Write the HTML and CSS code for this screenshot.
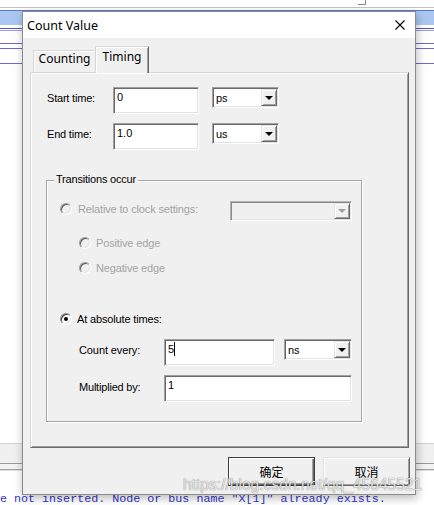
FILE: index.html
```html
<!DOCTYPE html>
<html>
<head>
<meta charset="utf-8">
<title>Count Value</title>
<link rel="stylesheet" href="styles.css">
</head>
<body>
<div class="desk">
  <div class="top"><div class="corner"></div></div>
  <div class="band"></div>
  <div class="dline"></div>
  <div class="bline b1"></div>
  <div class="bline b2"></div>
  <div class="bline b3"></div>
  <div class="spacer"></div>
  <div class="tool"></div>
  <div class="sep1"></div>
  <div class="sep2"></div>
  <div class="msgs">e not inserted. Node or bus name "X[1]" already exists.</div>
</div>

<div class="dialog">
  <div class="titlebar">
    <span class="title">Count Value</span>
    <svg class="close" width="10" height="10" viewBox="0 0 10 10"><path d="M0.5 0.5 L9.5 9.5 M9.5 0.5 L0.5 9.5" stroke="#000" stroke-width="1.1" fill="none"/></svg>
  </div>
  <div class="client">
    <div class="tabs">
      <div class="tab">Counting</div>
      <div class="tab active">Timing</div>
    </div>
    <div class="panel">
      <div class="row">
        <span class="lbl">Start time:</span>
        <div class="edit w86">0</div>
        <div class="combo w67"><span class="cv">ps</span><span class="cbtn"><i class="tri"></i></span></div>
      </div>
      <div class="row">
        <span class="lbl">End time:</span>
        <div class="edit w86">1.0</div>
        <div class="combo w67"><span class="cv">us</span><span class="cbtn"><i class="tri"></i></span></div>
      </div>

      <div class="group">
        <div class="legend">Transitions occur</div>
        <div class="opt oa dis">
          <span class="radio"></span>
          <span class="otext">Relative to clock settings:</span>
          <div class="combo cdis"><span class="cv"></span><span class="cbtn"><i class="tri"></i></span></div>
        </div>
        <div class="opt ob dis sub">
          <span class="radio"></span>
          <span class="otext">Positive edge</span>
        </div>
        <div class="opt oc dis sub">
          <span class="radio"></span>
          <span class="otext">Negative edge</span>
        </div>
        <div class="opt od">
          <span class="radio checked"></span>
          <span class="otext">At absolute times:</span>
        </div>
        <div class="frow fe">
          <span class="flbl">Count every:</span>
          <div class="edit w111">5<span class="caret"></span></div>
          <div class="combo w68"><span class="cv">ns</span><span class="cbtn"><i class="tri"></i></span></div>
        </div>
        <div class="frow ff">
          <span class="flbl f2">Multiplied by:</span>
          <div class="edit w188">1</div>
        </div>
      </div>
    </div>
    <div class="buttons">
      <button class="btn def">确定</button>
      <button class="btn">取消</button>
    </div>
  </div>
</div>

<div class="watermark">https://blog.csdn.net/qq_45645521</div>
</body>
</html>
```

FILE: styles.css
```css
html, body {
  margin: 0;
  padding: 0;
}
body {
  width: 434px;
  height: 505px;
  overflow: hidden;
  position: relative;
  background: #fff;
  font-family: "Liberation Sans", Arial, sans-serif;
}

/* background application */
.desk {
  height: 505px;
  display: flex;
  flex-direction: column;
}
.top {
  height: 7px;
  border-bottom: 1px solid #c4c4c4;
  display: flex;
}
.corner {
  margin-left: 358px;
  width: 7px;
  height: 4px;
  border-right: 1px solid #8a8a8a;
  border-bottom: 1px solid #8a8a8a;
}
.band {
  margin-top: 2px;
  height: 14px;
  border-top: 1px solid #5b74d6;
  background: #abc7f1;
}
.dline {
  margin-top: 3px;
  height: 1px;
  border-top: 1px solid #5656c8;
  border-bottom: 1px solid #9b9be2;
}
.bline {
  height: 1px;
  background: #6a6ad2;
}
.b1 { margin-top: 12px; }
.b2 { margin-top: 4px; }
.b3 { margin-top: 14px; }
.spacer { flex: 1; }
.tool {
  height: 19px;
  border-top: 1px solid #d4d4d4;
  background: #f0f0f0;
}
.sep1 {
  height: 5px;
  border-top: 1px solid #9a9a9a;
  background: #f2f2f2;
}
.sep2 {
  height: 1px;
  border-top: 1px solid #a4a4a4;
  background: #dcdcdc;
}
.msgs {
  height: 34px;
  box-sizing: border-box;
  padding-top: 21px;
  font-family: "Liberation Mono", "Courier New", monospace;
  font-size: 11.7px;
  line-height: 14px;
  color: #3434c8;
  white-space: pre;
}

/* dialog window */
.dialog {
  position: absolute;
  left: 22px;
  top: 11px;
  width: 394px;
  height: 484px;
  box-sizing: border-box;
  border: 1px solid #8c8c8c;
  background: #f0f0f0;
  box-shadow: 1px 3px 9px rgba(0, 0, 0, 0.28);
  display: flex;
  flex-direction: column;
}
.titlebar {
  height: 26px;
  background: #fff;
  display: flex;
  align-items: center;
  justify-content: space-between;
  padding: 0 10px 0 4px;
}
.title {
  font-family: "Noto Sans", sans-serif;
  font-size: 12.5px;
  line-height: 17px;
  color: #000;
}
.close { display: block; }

.client {
  padding: 8px 6px 0 7px;
  display: flex;
  flex-direction: column;
}
.tabs {
  height: 27px;
  margin-bottom: -1px;
  padding-left: 3px;
  display: flex;
  align-items: flex-end;
  position: relative;
  z-index: 1;
}
.tab {
  box-sizing: border-box;
  width: 62px;
  height: 22px;
  margin-bottom: 1px;
  border-top: 1px solid #d6d6d6;
  border-left: 1px solid #d6d6d6;
  box-shadow: inset 1px 1px 0 #fff;
  font-family: "Noto Sans", sans-serif;
  font-size: 12px;
  line-height: 16px;
  text-align: center;
  color: #000;
  background: #f0f0f0;
}
.tab.active {
  width: 54px;
  height: 27px;
  margin-bottom: 0;
  padding-top: 2px;
  border-right: 1px solid #696969;
  box-shadow: inset 1px 1px 0 #fff, inset -1px 0 0 #a0a0a0;
}

.panel {
  box-sizing: border-box;
  height: 376px;
  border-top: 1px solid #d6d6d6;
  border-left: 1px solid #d6d6d6;
  border-right: 1px solid #696969;
  border-bottom: 1px solid #696969;
  box-shadow: inset 1px 1px 0 #fff, inset -1px -1px 0 #a0a0a0;
  padding: 14px 0 0 16px;
  display: flex;
  flex-direction: column;
  font-size: 11px;
  color: #000;
}
.row {
  display: flex;
  align-items: flex-start;
  height: 27px;
}
.row + .row { margin-top: 9px; }
.lbl {
  width: 66px;
  padding-top: 5px;
  line-height: 13px;
  letter-spacing: -0.2px;
}

/* edit box */
.edit {
  box-sizing: border-box;
  height: 27px;
  border: 1px solid;
  border-color: #a0a0a0 #fff #fff #a0a0a0;
  box-shadow: inset 1px 1px 0 #696969, inset -1px -1px 0 #e3e3e3;
  background: #fff;
  padding: 3px 3px 0 3px;
  font-size: 11px;
  line-height: 13px;
  color: #000;
  display: flex;
  align-items: flex-start;
}
.w86 { width: 86px; }
.w111 { width: 111px; }
.w188 { width: 188px; }
.caret {
  display: block;
  width: 0;
  height: 14px;
  margin-top: -1px;
  margin-left: 0;
  border-left: 1px solid #000;
}

/* combo box */
.combo {
  box-sizing: border-box;
  height: 21px;
  border: 1px solid;
  border-color: #a0a0a0 #fff #fff #a0a0a0;
  box-shadow: inset 1px 1px 0 #696969, inset -1px -1px 0 #e3e3e3;
  background: #fff;
  padding: 1px;
  display: flex;
}
.row .combo { margin-left: 13px; }
.w67 { width: 67px; }
.w68 { width: 68px; }
.cv {
  flex: 1;
  padding: 3px 0 0 2px;
  font-size: 11px;
  line-height: 13px;
  letter-spacing: -0.2px;
}
.cbtn {
  box-sizing: border-box;
  width: 16px;
  border: 1px solid;
  border-color: #e3e3e3 #696969 #696969 #e3e3e3;
  box-shadow: inset 1px 1px 0 #fff, inset -1px -1px 0 #a0a0a0;
  background: #f0f0f0;
  display: flex;
  align-items: center;
  justify-content: center;
}
.tri {
  display: block;
  width: 0;
  height: 0;
  border-left: 4px solid transparent;
  border-right: 4px solid transparent;
  border-top: 4px solid #000;
}

/* group box */
.group {
  position: relative;
  box-sizing: border-box;
  width: 316px;
  height: 242px;
  margin: 30px 0 0 -1px;
  border: 1px solid #a6a6a6;
  box-shadow: inset 1px 1px 0 #fff, 1px 1px 0 #fff;
  display: flex;
  flex-direction: column;
}
.legend {
  position: absolute;
  left: 7px;
  top: -8px;
  padding: 0 2px;
  background: #f0f0f0;
  line-height: 13px;
  letter-spacing: -0.2px;
}
.opt {
  display: flex;
  align-items: flex-start;
  padding-left: 13px;
  gap: 5px;
}
.opt.sub { padding-left: 32px; }
.oa { margin-top: 22px; gap: 6px; padding-right: 9px; height: 13px; }
.ob { margin-top: 21px; }
.oc { margin-top: 12px; }
.od { margin-top: 38px; }
.otext {
  line-height: 13px;
  letter-spacing: -0.15px;
}
.dis .otext { color: #a3a3a3; }

.radio {
  box-sizing: border-box;
  width: 12px;
  height: 12px;
  border-radius: 50%;
  border: 1px solid;
  border-color: #8a8a8a #fff #fff #8a8a8a;
  box-shadow: inset 1px 1px 0 #404040, inset -1px -1px 0 #e3e3e3;
  background: #fff;
  display: flex;
  align-items: center;
  justify-content: center;
  flex: none;
}
.dis .radio {
  background: #f0f0f0;
  border-color: #9a9a9a #fff #fff #9a9a9a;
  box-shadow: inset 1px 1px 0 #5a5a5a, inset -1px -1px 0 #e3e3e3;
}
.radio.checked::after {
  content: "";
  width: 4px;
  height: 4px;
  border-radius: 50%;
  background: #000;
}

.combo.cdis {
  width: 122px;
  height: 20px;
  margin-left: auto;
  margin-top: -2px;
  background: #f0f0f0;
  border-color: #b4b4b4 #fff #fff #b4b4b4;
  box-shadow: inset 1px 1px 0 #8a8a8a, inset -1px -1px 0 #e3e3e3;
}
.cdis .tri { border-top-color: #a0a0a0; }

.frow {
  display: flex;
  align-items: flex-start;
  padding-left: 32px;
}
.fe { margin-top: 13px; }
.ff { margin-top: 9px; }
.flbl {
  width: 85px;
  padding-top: 5px;
  line-height: 13px;
  letter-spacing: -0.1px;
}
.flbl.f2 { padding-top: 6px; letter-spacing: -0.2px; }
.frow .combo { margin-left: 9px; }

/* dialog buttons */
.buttons {
  margin-top: 9px;
  margin-right: -1px;
  display: flex;
  justify-content: flex-end;
  gap: 8px;
}
.btn {
  box-sizing: border-box;
  width: 87px;
  height: 29px;
  margin: 0;
  padding: 0;
  border: 1px solid;
  border-color: #e3e3e3 #696969 #696969 #e3e3e3;
  box-shadow: inset 1px 1px 0 #fff, inset -1px -1px 0 #a0a0a0;
  background: #f0f0f0;
  font-family: "Noto Sans CJK SC", sans-serif;
  font-size: 12px;
  line-height: 16px;
  color: #000;
}
.btn.def {
  border: 1px solid #3c3c3c;
  box-shadow: inset 1px 1px 0 #fff, inset -1px -1px 0 #696969, inset -2px -2px 0 #a0a0a0;
}

/* watermark overlay */
.watermark {
  position: absolute;
  left: 183px;
  top: 477px;
  font-family: "Liberation Sans", Arial, sans-serif;
  font-size: 15.6px;
  line-height: 16px;
  color: rgba(255, 255, 255, 0.82);
  text-shadow: 0 0 1px rgba(0, 0, 0, 0.45), 0 0 1px rgba(0, 0, 0, 0.25);
  white-space: nowrap;
}
```
